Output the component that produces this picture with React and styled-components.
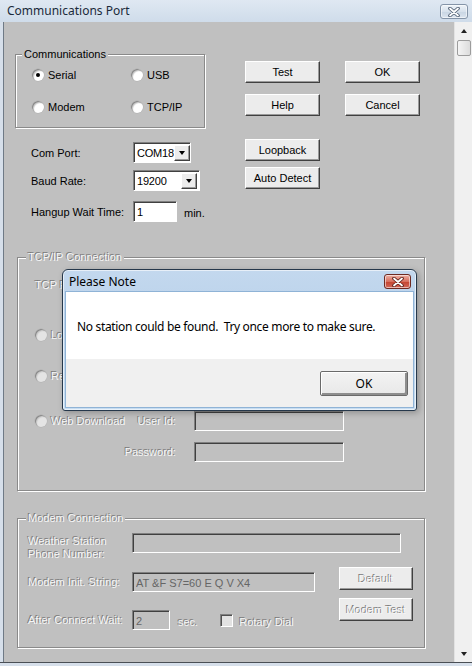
import React from "react";
import styled, { createGlobalStyle } from "styled-components";

const GlobalStyle = createGlobalStyle`
  html, body { margin: 0; padding: 0; background: #c0c0c0; }
  body { font-family: "Liberation Sans", Arial, sans-serif; font-size: 11px; color: #000; }
  * { box-sizing: border-box; }
`;

const Window = styled.div`
  width: 472px;
  height: 666px;
  display: flex;
  flex-direction: column;
  background: #d6dfea;
  overflow: hidden;
`;

const TitleBar = styled.div`
  height: 22px;
  display: flex;
  align-items: flex-start;
  justify-content: space-between;
  padding: 0 4px 0 7px;
  background: linear-gradient(#dfe8f2, #cfdcea);
`;

const Caption = styled.span`
  font-family: "Noto Sans", "Open Sans", sans-serif;
  font-size: 12px;
  line-height: 22px;
  color: #1b2a3a;
`;

const CloseBox = styled.div`
  width: ${(p) => p.$w}px;
  height: ${(p) => p.$h}px;
  margin-top: ${(p) => p.$top}px;
  border: 1px solid ${(p) => (p.$red ? "#6e2a22" : "#8494a8")};
  border-radius: 3px;
  background: ${(p) =>
    p.$red
      ? "linear-gradient(#eeb0a4, #d8705f 50%, #c3432f 51%, #d2685a)"
      : "linear-gradient(#eef3f8, #d7e1ec 50%, #c8d5e3 51%, #dbe4ee)"};
  display: flex;
  align-items: center;
  justify-content: center;
  box-shadow: inset 0 0 0 1px rgba(255, 255, 255, 0.55);
`;

const Cross = ({ dark }) => (
  <svg width="12" height="10" viewBox="0 0 12 10">
    <path d="M2 1.5 L10 8.5 M10 1.5 L2 8.5" stroke={dark} strokeWidth="3.6" strokeLinecap="round" fill="none" />
    <path d="M2 1.5 L10 8.5 M10 1.5 L2 8.5" stroke="#fff" strokeWidth="1.8" strokeLinecap="round" fill="none" />
  </svg>
);

const Body = styled.div`
  height: 640px;
  display: flex;
  padding-left: 3px;
`;

const Content = styled.div`
  position: relative;
  width: 451px;
  height: 640px;
  border-left: 1px solid #6f7a86;
  background: #c0c0c0;
`;

const Scrollbar = styled.div`
  width: 18px;
  height: 640px;
  background: #f0f0f0;
  border-left: 1px solid #e2e2e2;
  display: flex;
  flex-direction: column;
  align-items: center;
`;

const ScrollArrow = styled.div`
  height: 17px;
  width: 100%;
  display: flex;
  align-items: center;
  justify-content: center;
  &::before {
    content: "";
    border-left: 3px solid transparent;
    border-right: 3px solid transparent;
    ${(p) => (p.$down ? "border-top: 4px solid #222;" : "border-bottom: 4px solid #222;")}
  }
`;

const Thumb = styled.div`
  width: 14px;
  height: 16px;
  margin-top: 1px;
  border: 1px solid #9c9c9c;
  border-radius: 2px;
  background: linear-gradient(90deg, #f4f4f4, #dcdcdc);
`;

const Track = styled.div`
  flex: 1;
`;

const BottomEdge = styled.div`
  height: 4px;
  border-top: 1px solid #4a4f55;
  background: #d6dfea;
`;

/* ---------- classic controls ---------- */

const disabledText = `
  color: #f6f6f6;
  text-shadow: -1px -1px 0 #7c7c7c;
`;

const Text = styled.span`
  white-space: nowrap;
  line-height: 13px;
  ${(p) => (p.$disabled ? disabledText : "color: #000;")}
`;

const Button = styled.button`
  width: ${(p) => p.$w || 75}px;
  height: ${(p) => p.$h || 22}px;
  padding: 0;
  font-family: "Liberation Sans", Arial, sans-serif;
  font-size: 11px;
  background: #ececec;
  border: 1px solid;
  border-color: #ffffff #404040 #404040 #ffffff;
  box-shadow: inset -1px -1px 0 #9a9a9a;
  ${(p) => (p.disabled ? disabledText : "color: #000;")}
`;

const Group = styled.div`
  position: relative;
  width: ${(p) => p.$w}px;
  height: ${(p) => p.$h}px;
  margin-left: ${(p) => p.$ml || 0}px;
  margin-top: ${(p) => p.$mt || 0}px;
  border: 1px solid #8a8a8a;
  box-shadow: 1px 1px 0 #fff, inset 1px 1px 0 #fff;
  padding: ${(p) => p.$pad || 0};
`;

const Legend = styled.span`
  position: absolute;
  top: -7px;
  left: ${(p) => p.$left}px;
  padding: 0 2px;
  background: #c0c0c0;
  line-height: 13px;
  white-space: nowrap;
  ${(p) => (p.$disabled ? disabledText : "color: #000;")}
`;

const RadioCircle = styled.span`
  position: relative;
  flex: none;
  width: 12px;
  height: 12px;
  border-radius: 50%;
  background: ${(p) => (p.$disabled ? "#e4e4e4" : "#fff")};
  box-shadow: inset 1px 1px 0 #8a8a8a, inset 2px 2px 1px #c8c8c8, 0 0 0 0.5px #b0b0b0;
  &::after {
    content: "";
    display: ${(p) => (p.$checked ? "block" : "none")};
    position: absolute;
    left: 4px;
    top: 4px;
    width: 4px;
    height: 4px;
    border-radius: 50%;
    background: #000;
  }
`;

const RadioItem = styled.label`
  display: flex;
  align-items: center;
  gap: 4px;
  height: 14px;
`;

const Radio = ({ label, checked, disabled }) => (
  <RadioItem>
    <RadioCircle $checked={checked} $disabled={disabled} />
    <Text $disabled={disabled}>{label}</Text>
  </RadioItem>
);

const Field = styled.input`
  width: ${(p) => p.$w}px;
  height: ${(p) => p.$h || 20}px;
  padding: 1px 3px 0;
  font-family: "Liberation Sans", Arial, sans-serif;
  font-size: 11px;
  border: 1px solid;
  border-color: #808080 #ffffff #ffffff #808080;
  box-shadow: inset 1px 1px 0 #404040;
  outline: none;
  background: ${(p) => (p.disabled ? "#c0c0c0" : "#fff")};
  color: #000;
  &:disabled {
    color: #666;
  }
`;

const SelectBox = styled.div`
  width: ${(p) => p.$w}px;
  height: 21px;
  display: flex;
  align-items: center;
  justify-content: space-between;
  padding: 2px 2px 2px 3px;
  background: #fff;
  border: 1px solid;
  border-color: #808080 #ffffff #ffffff #808080;
  box-shadow: inset 1px 1px 0 #404040;
  font-size: 11px;
  letter-spacing: -0.2px;
`;

const DropButton = styled.span`
  width: 16px;
  height: 16px;
  flex: none;
  display: flex;
  align-items: center;
  justify-content: center;
  background: #ececec;
  border: 1px solid;
  border-color: #ffffff #404040 #404040 #ffffff;
  box-shadow: inset -1px -1px 0 #9a9a9a;
  &::before {
    content: "";
    border-left: 3.5px solid transparent;
    border-right: 3.5px solid transparent;
    border-top: 4px solid #000;
  }
`;

const Select = ({ w, value }) => (
  <SelectBox $w={w}>
    <span>{value}</span>
    <DropButton />
  </SelectBox>
);

const CheckBox = styled.span`
  width: 13px;
  height: 13px;
  flex: none;
  background: #e2e2e2;
  border: 1px solid;
  border-color: #808080 #ffffff #ffffff #808080;
  box-shadow: inset 1px 1px 0 #505050;
`;

/* ---------- top area ---------- */

const TopArea = styled.div`
  display: flex;
  padding-left: 11px;
  height: 235px;
`;

const LeftCol = styled.div`
  width: 230px;
  padding-top: 32px;
`;

const RightCol = styled.div`
  padding-top: 39px;
  display: flex;
  flex-direction: column;
  align-items: flex-start;
`;

const ButtonGrid = styled.div`
  display: grid;
  grid-template-columns: 75px 75px;
  column-gap: 25px;
  row-gap: 11px;
  margin-bottom: 23px;
`;

const RadioGrid = styled.div`
  display: grid;
  grid-template-columns: 99px 1fr;
  row-gap: 18px;
  padding: 13px 0 0 16px;
`;

const FormRow = styled.div`
  display: flex;
  align-items: center;
  height: 21px;
  margin-top: ${(p) => p.$mt}px;
  padding-left: 16px;
`;

const FieldLabel = styled.span`
  width: 102px;
  flex: none;
  white-space: nowrap;
`;

const Unit = styled(Text)`
  margin-left: ${(p) => p.$ml || 7}px;
  padding-top: 4px;
`;

/* ---------- tcp/ip ---------- */

const TcpRow = styled.div`
  display: flex;
  align-items: center;
  height: ${(p) => p.$h || 20}px;
  margin-top: ${(p) => p.$mt}px;
`;

const TcpGrid = styled.div`
  display: grid;
  grid-template-columns: 141px 150px;
  column-gap: 18px;
  align-items: center;
  height: 20px;
  margin-top: ${(p) => p.$mt}px;
`;

const SplitCell = styled.div`
  display: flex;
  align-items: center;
  justify-content: ${(p) => p.$justify || "space-between"};
`;

/* ---------- modem ---------- */

const ModemRow = styled.div`
  display: grid;
  grid-template-columns: 104px auto;
  align-items: ${(p) => p.$align || "center"};
  justify-content: start;
  height: 20px;
  margin-top: ${(p) => p.$mt || 0}px;
`;

const TwoLine = styled(Text)`
  display: block;
  padding-top: 2px;
`;

const ModemLower = styled.div`
  display: flex;
  margin-top: 14px;
`;

const ModemLeft = styled.div`
  width: 311px;
  padding-top: 5px;
`;

const InlineGroup = styled.div`
  display: flex;
  align-items: center;
`;

const ModemButtons = styled.div`
  display: flex;
  flex-direction: column;
  gap: 8px;
`;

/* ---------- message box ---------- */

const Dialog = styled.div`
  position: absolute;
  left: 58px;
  top: 247px;
  width: 355px;
  height: 142px;
  display: flex;
  flex-direction: column;
  padding: 0 3px 3px;
  border: 1px solid #26384b;
  border-radius: 6px 6px 3px 3px;
  background: linear-gradient(#c3d8ee, #b9d1ea 40%, #c7ddf1);
  box-shadow: inset 0 0 0 1px rgba(255, 255, 255, 0.6), 2px 2px 6px rgba(0, 0, 0, 0.25);
`;

const DialogTitle = styled.div`
  height: 22px;
  display: flex;
  align-items: flex-start;
  justify-content: space-between;
  padding: 0 2px 0 3px;
`;

const DialogCaption = styled.span`
  font-family: "Noto Sans", "Open Sans", sans-serif;
  font-size: 12px;
  line-height: 23px;
  color: #000;
`;

const DialogClient = styled.div`
  flex: 1;
  display: flex;
  flex-direction: column;
  box-shadow: 0 0 0 1px #8fb3d6;
`;

const DialogMessage = styled.div`
  height: 67px;
  display: flex;
  align-items: center;
  padding: 2px 0 0 11px;
  background: #fff;
  font-family: "Noto Sans", "Open Sans", sans-serif;
  font-size: 12px;
  letter-spacing: -0.33px;
  white-space: pre;
  color: #000;
`;

const DialogFooter = styled.div`
  flex: 1;
  display: flex;
  align-items: center;
  justify-content: flex-end;
  padding-right: 5px;
  background: #f0f0f0;
`;

const DialogButton = styled.button`
  width: 88px;
  height: 25px;
  font-family: "Noto Sans", "Open Sans", sans-serif;
  font-size: 12px;
  color: #000;
  background: linear-gradient(#f3f3f3, #e8e8e8);
  border: 1px solid #6a6a6a;
  border-radius: 2px;
  box-shadow: inset 1px 1px 0 #fff, inset -2px -2px 0 #8e8e8e;
`;

const App = () => (
  <>
    <GlobalStyle />
    <Window>
      <TitleBar>
        <Caption>Communications Port</Caption>
        <CloseBox $w={28} $h={15} $top={4}>
          <Cross dark="#4d5c70" />
        </CloseBox>
      </TitleBar>
      <Body>
        <Content>
          <TopArea>
            <LeftCol>
              <Group $w={190} $h={74}>
                <Legend $left={6}>Communications</Legend>
                <RadioGrid>
                  <Radio label="Serial" checked />
                  <Radio label="USB" />
                  <Radio label="Modem" />
                  <Radio label="TCP/IP" />
                </RadioGrid>
              </Group>
              <FormRow $mt={14}>
                <FieldLabel>Com Port:</FieldLabel>
                <Select w={58} value="COM18" />
              </FormRow>
              <FormRow $mt={7}>
                <FieldLabel>Baud Rate:</FieldLabel>
                <Select w={67} value="19200" />
              </FormRow>
              <FormRow $mt={10}>
                <FieldLabel>Hangup Wait Time:</FieldLabel>
                <Field $w={44} $h={21} defaultValue="1" />
                <Unit>min.</Unit>
              </FormRow>
            </LeftCol>
            <RightCol>
              <ButtonGrid>
                <Button>Test</Button>
                <Button>OK</Button>
                <Button>Help</Button>
                <Button>Cancel</Button>
              </ButtonGrid>
              <Button>Loopback</Button>
              <Button style={{ marginTop: 6 }}>Auto Detect</Button>
            </RightCol>
          </TopArea>

          <Group $w={408} $h={234} $ml={13} $pad="0 6px 0 17px">
            <Legend $left={8} $disabled>TCP/IP Connection</Legend>
            <TcpRow $mt={17}>
              <Text $disabled>TCP Port:</Text>
            </TcpRow>
            <TcpRow $mt={28} $h={24}>
              <Radio label="Local Network" disabled />
            </TcpRow>
            <TcpRow $mt={19}>
              <Radio label="Remote" disabled />
            </TcpRow>
            <TcpGrid $mt={25}>
              <SplitCell>
                <Radio label="Web Download" disabled />
                <Text $disabled>User Id:</Text>
              </SplitCell>
              <Field $w={150} disabled />
            </TcpGrid>
            <TcpGrid $mt={11}>
              <SplitCell $justify="flex-end">
                <Text $disabled>Password:</Text>
              </SplitCell>
              <Field $w={150} disabled />
            </TcpGrid>
          </Group>

          <Group $w={408} $h={130} $ml={13} $mt={27} $pad="0 0 0 10px">
            <Legend $left={8} $disabled>Modem Connection</Legend>
            <ModemRow $mt={14} $align="start">
              <TwoLine $disabled>
                Weather Station
                <br />
                Phone Number:
              </TwoLine>
              <Field $w={269} disabled />
            </ModemRow>
            <ModemLower>
              <ModemLeft>
                <ModemRow>
                  <Text $disabled>Modem Init. String:</Text>
                  <Field $w={183} disabled defaultValue="AT &F S7=60 E Q V X4" />
                </ModemRow>
                <ModemRow $mt={18}>
                  <Text $disabled>After Connect Wait:</Text>
                  <InlineGroup>
                    <Field $w={38} disabled defaultValue="2" />
                    <Unit $disabled $ml={8}>sec.</Unit>
                    <CheckBox style={{ marginLeft: 22 }} />
                    <Unit $disabled $ml={6}>Rotary Dial</Unit>
                  </InlineGroup>
                </ModemRow>
              </ModemLeft>
              <ModemButtons>
                <Button $w={74} $h={23} disabled>Default</Button>
                <Button $w={74} $h={23} disabled>Modem Test</Button>
              </ModemButtons>
            </ModemLower>
          </Group>

          <Dialog>
            <DialogTitle>
              <DialogCaption>Please Note</DialogCaption>
              <CloseBox $w={27} $h={15} $top={4} $red>
                <Cross dark="#5a1f18" />
              </CloseBox>
            </DialogTitle>
            <DialogClient>
              <DialogMessage>No station could be found.  Try once more to make sure.</DialogMessage>
              <DialogFooter>
                <DialogButton>OK</DialogButton>
              </DialogFooter>
            </DialogClient>
          </Dialog>
        </Content>
        <Scrollbar>
          <ScrollArrow />
          <Thumb />
          <Track />
          <ScrollArrow $down />
        </Scrollbar>
      </Body>
      <BottomEdge />
    </Window>
  </>
);

export default App;
